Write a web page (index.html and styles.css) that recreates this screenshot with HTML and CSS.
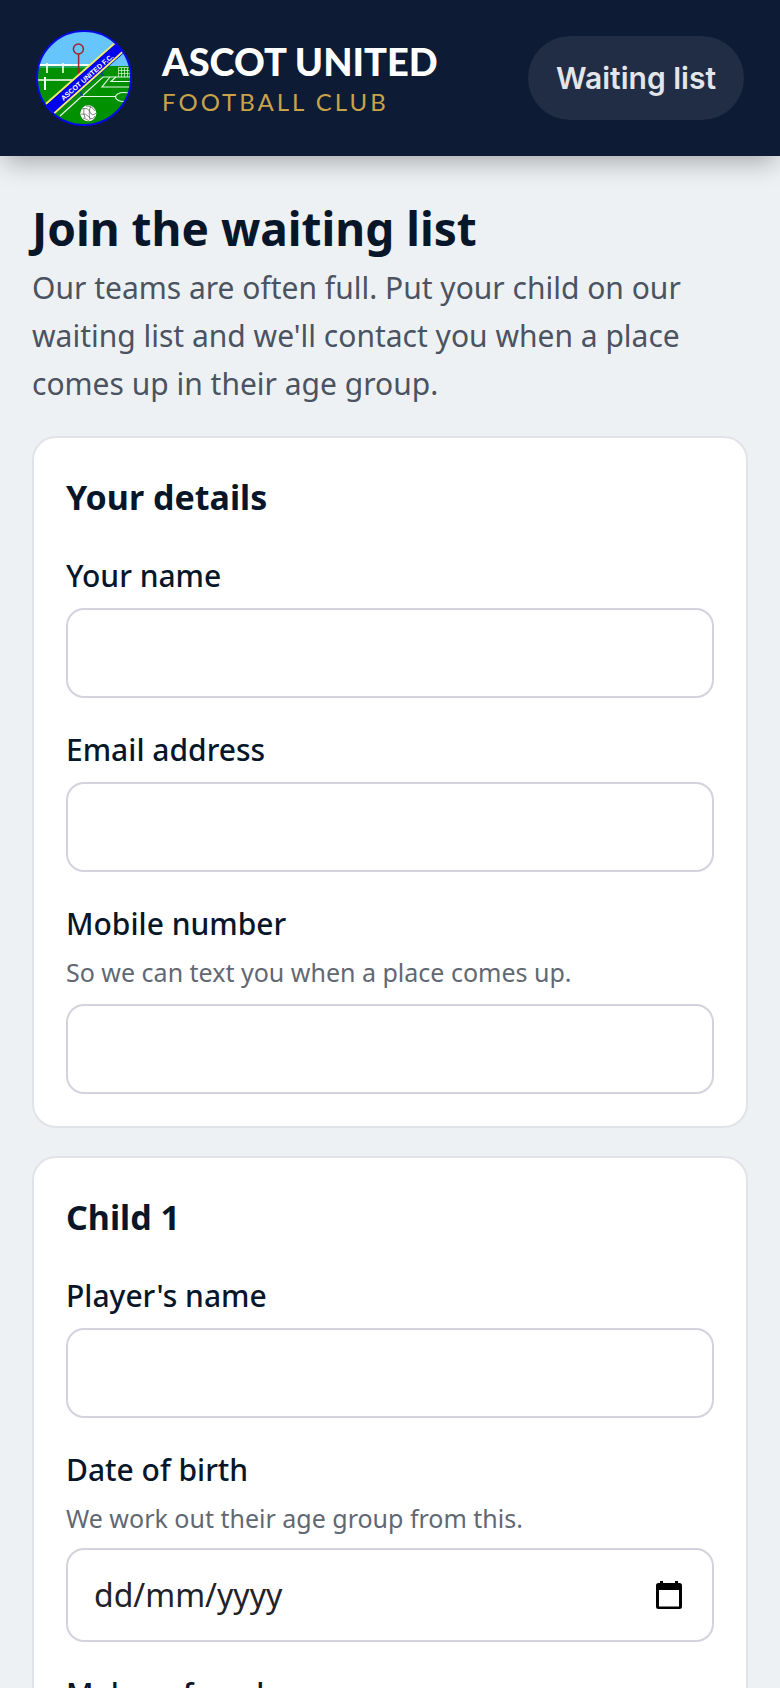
FILE: index.html
```html
<!DOCTYPE html>
<html lang="en-GB">
<head>
<meta charset="utf-8">
<meta name="viewport" content="width=device-width, initial-scale=1">
<title>Join the waiting list</title>
<link rel="stylesheet" href="styles.css">
</head>
<body>
<header class="site-header">
  <a class="brand" href="#">
    <svg class="crest" viewBox="0 0 96 96" role="img" aria-label="Ascot United F.C. crest">
      <defs><clipPath id="disc"><circle cx="48" cy="48" r="47"/></clipPath></defs>
      <g clip-path="url(#disc)">
        <rect width="96" height="96" fill="#66c5fb"/>
        <rect y="36" width="96" height="60" fill="#009000"/>
        <g fill="none" stroke="#fff">
          <path d="M0 35H58" stroke-width="2"/>
          <path d="M0 37H56" stroke="#45bfc5"/>
          <path d="M11 33v10M27 33v10" stroke-width="1.6"/>
          <path d="M0 50H40" stroke-width="1.6"/>
          <path d="M9 47v13" stroke-width="2"/>
        </g>
        <g fill="none" stroke="#a32035">
          <circle cx="42.4" cy="19" r="5" stroke-width="1.5"/>
          <path d="M42.6 24v21" stroke-width="1.5"/>
        </g>
        <g fill="none" stroke="#e8f6e8" stroke-width="1.2">
          <path d="M24 86L67 47H96"/>
          <path d="M74 47L66 57H96M80 47L75 51.500H96" />
          <path d="M45 66.500H80"/>
          <ellipse cx="88" cy="67" rx="8.500" ry="4.500"/>
          <path d="M82.500 47V37.500H94V47M85.500 38v9M88.500 38v9M91.500 38v9M83 40.500H94M83 43.500H94" stroke-width=".7"/>
        </g>
        <path d="M10 75L78 13L89 22L19 84Z" fill="#0000f0"/>
        <path d="M8 75.500L79 13M18 83.500L87 21.500" stroke="#f3ee62" stroke-width="1.8"/>
        <path d="M45 62v3h2M66 42v3h2" stroke="#0a3c96" stroke-width="1.500" fill="none"/>
        <text class="crest-text" x="27.500" y="71" transform="rotate(-41 27.500 71)">ASCOT UNITED F.C.</text>
        <circle cx="52.300" cy="83.300" r="8" fill="#fff"/>
        <path d="M46 79q6-2 8 3t6 1M45 84q5-1 8 3t6-1M50 76q6 0 9 5M47 88q4 1 6 3M55 76q-3 5-1 14M48 78q-1 5 1 10" fill="none" stroke="#555" stroke-width=".7"/>
      </g>
      <circle cx="48" cy="48" r="47" fill="none" stroke="#0808e4" stroke-width="2"/>
    </svg>
    <span class="brand-text">
      <span class="brand-name">ASCOT UNITED</span>
      <span class="brand-sub">FOOTBALL CLUB</span>
    </span>
  </a>
  <a class="pill" href="#waiting-list">Waiting list</a>
</header>

<main class="page" id="waiting-list">
  <h1 class="page-title">Join the waiting list</h1>
  <p class="intro">Our teams are often full. Put your child on our waiting list and we'll contact you when a place comes up in their age group.</p>

  <form class="form">
    <section class="card">
      <h2 class="card-title">Your details</h2>
      <div class="field">
        <label class="label" for="name">Your name</label>
        <input class="input" id="name" type="text">
      </div>
      <div class="field">
        <label class="label" for="email">Email address</label>
        <input class="input" id="email" type="email">
      </div>
      <div class="field">
        <label class="label" for="mobile">Mobile number</label>
        <p class="hint" id="mobile-hint">So we can text you when a place comes up.</p>
        <input class="input" id="mobile" type="tel" aria-describedby="mobile-hint">
      </div>
    </section>

    <section class="card">
      <h2 class="card-title">Child 1</h2>
      <div class="field">
        <label class="label" for="player">Player's name</label>
        <input class="input" id="player" type="text">
      </div>
      <div class="field">
        <label class="label" for="dob">Date of birth</label>
        <p class="hint" id="dob-hint">We work out their age group from this.</p>
        <div class="date-box">
          <input class="date-input" id="dob" type="text" inputmode="numeric" placeholder="dd/mm/yyyy" aria-describedby="dob-hint">
          <button class="date-button" type="button" aria-label="Choose date">
            <svg class="date-icon" viewBox="0 0 26 28" aria-hidden="true">
              <path fill-rule="evenodd" d="M4 0h3v2h12V0h3v2h1.500a2.500 2.500 0 0 1 2.500 2.500v21a2.500 2.500 0 0 1-2.500 2.500h-21a2.500 2.500 0 0 1-2.500-2.500v-21a2.500 2.500 0 0 1 2.500-2.500H4zM3 9v16.500h20V9z"/>
            </svg>
          </button>
        </div>
      </div>
      <div class="field">
        <label class="label" for="sex">Male or female</label>
        <select class="input" id="sex"><option>Male</option><option>Female</option></select>
      </div>
    </section>
  </form>
</main>
</body>
</html>
```
FILE: styles.css
```css
* { box-sizing: border-box; }

html { height: 100%; overflow: hidden; }

body {
  height: 100%;
  margin: 0;
  overflow: hidden auto;
  scrollbar-width: none;
  background: #edf1f4;
  color: #081629;
  font-family: "Noto Sans", "Open Sans", sans-serif;
  font-size: 30px;
  line-height: 48px;
}

.site-header {
  position: relative;
  display: flex;
  align-items: center;
  justify-content: space-between;
  padding: 30px 36px;
  background: #0d1b34;
  box-shadow: 0 10px 24px -4px rgba(0, 0, 0, 0.3);
}

.brand {
  display: flex;
  align-items: center;
  gap: 30px;
  color: #fff;
  text-decoration: none;
}

.crest { width: 96px; height: 96px; }

.crest-text {
  fill: #fff;
  font-family: "Liberation Sans", Arial, sans-serif;
  font-size: 7px;
  font-weight: 700;
}

.brand-text {
  display: flex;
  flex-direction: column;
  padding-top: 6px;
}

.brand-name {
  font-family: Lato, sans-serif;
  font-size: 38px;
  font-weight: 900;
  line-height: 42px;
}

.brand-sub {
  color: #c9a24a;
  font-family: Lato, sans-serif;
  font-size: 24px;
  line-height: 40px;
  letter-spacing: 3px;
}

.pill {
  padding: 18px 28px;
  border-radius: 42px;
  background: #202d44;
  color: #e2e5e9;
  font-family: Inter, sans-serif;
  font-size: 30px;
  font-weight: 600;
  text-decoration: none;
}

.page { padding: 44px 32px; }

.page-title {
  margin: 0 0 8px;
  font-size: 46px;
  font-weight: 700;
  line-height: 56px;
}

.intro { margin: 0 0 28px; color: #4b5361; }

.form { display: grid; gap: 28px; }

.card {
  display: grid;
  gap: 28px;
  padding: 32px;
  border: 2px solid #e0e3e8;
  border-radius: 24px;
  background: #fff;
}

.card-title {
  margin: 0;
  font-size: 34px;
  font-weight: 700;
  line-height: 54px;
}

.field { display: flex; flex-direction: column; }

.label { font-weight: 500; }

.hint {
  margin: 4px 0;
  color: #616873;
  font-size: 25px;
  line-height: 40px;
}

.input,
.date-box {
  width: 100%;
  height: 90px;
  margin-top: 8px;
  padding: 0 26px;
  border: 2px solid #d2d3dd;
  border-radius: 18px;
  background: #fff;
  font: inherit;
}

.date-box {
  display: flex;
  align-items: center;
  justify-content: space-between;
  height: 94px;
  margin-top: 6px;
  padding-right: 30px;
}

.date-input {
  flex: 1;
  min-width: 0;
  padding: 0;
  border: 0;
  background: none;
  color: #1f2329;
  font: inherit;
  font-size: 32px;
}

.date-input::placeholder { color: #1f2329; opacity: 1; }

.date-button {
  display: flex;
  padding: 0;
  border: 0;
  background: none;
}

.date-icon { width: 26px; height: 28px; }
```
